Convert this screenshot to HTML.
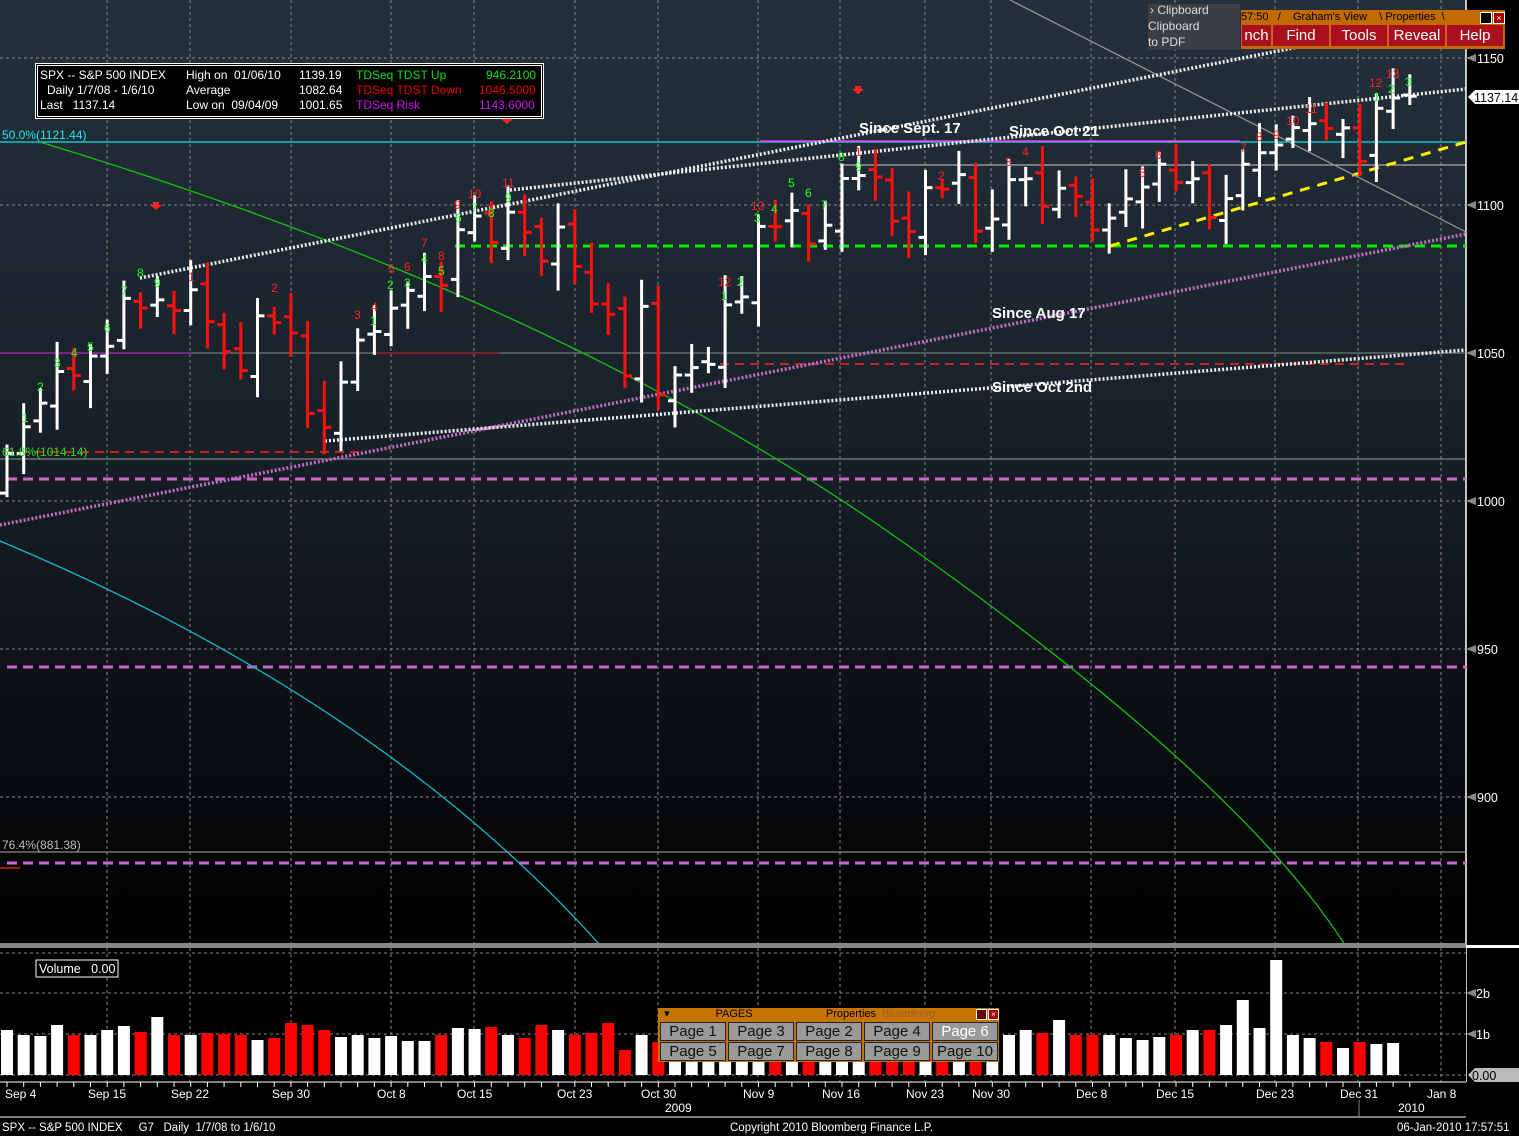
<!DOCTYPE html>
<html><head><meta charset="utf-8">
<style>
html,body{margin:0;padding:0;background:#000;}
body{width:1519px;height:1136px;position:relative;overflow:hidden;font-family:"Liberation Sans",sans-serif;}
#main{position:absolute;left:0;top:0;width:1466px;height:944px;background:linear-gradient(#23303b 0%,#1a232c 40%,#0c1014 75%,#000 100%);}
svg{position:absolute;left:0;top:0;}
.t{font-family:"Liberation Sans",sans-serif;}
#legend{position:absolute;left:35px;top:63px;width:503px;height:50px;border:3px double #fff;background:#000;color:#fff;font-size:12px;line-height:15px;}
#legend div{position:absolute;white-space:pre;}
#menuL{position:absolute;left:1148px;top:4px;width:92px;height:46px;background:#3a3f46;color:#ddd;font-size:12px;line-height:16px;overflow:hidden;}
#bar{position:absolute;left:1241px;top:10px;width:264px;height:39px;background:#c06a00;}
.btn{position:absolute;top:15px;height:21px;background:#a8101e;color:#fff;font-size:15px;line-height:21px;text-align:center;border-left:1px solid #e05050;}
#pages{position:absolute;left:658px;top:1008px;width:341px;height:54px;background:#c67400;}
.pg{position:absolute;width:64px;height:17px;background:#9a9a9a;border:1px solid #223;color:#111;font-size:15px;line-height:17px;text-align:center;}
</style></head><body>
<div id="main"></div>
<svg width="1519" height="1136" id="sv" xmlns="http://www.w3.org/2000/svg">
<rect x="1466" y="0" width="53" height="1136" fill="#000"/>
<line x1="1466" y1="0" x2="1466" y2="1082" stroke="#fff" stroke-width="1.5"/>
<rect x="0" y="948" width="1466" height="134" fill="#000"/>
<g stroke="#888" stroke-dasharray="3,3" stroke-width="1" id="grid">
<line x1="0" y1="58" x2="1466" y2="58"/>
<line x1="0" y1="205" x2="1466" y2="205"/>
<line x1="0" y1="649" x2="1466" y2="649"/>
<line x1="0" y1="797" x2="1466" y2="797"/>
<line x1="0" y1="501" x2="1466" y2="501"/>
<line x1="0" y1="953" x2="1466" y2="953"/>
<line x1="0" y1="993" x2="1466" y2="993"/>
<line x1="0" y1="1034" x2="1466" y2="1034"/>
<line x1="0" y1="1075" x2="1466" y2="1075"/>
</g>
<g id="vgrid" stroke="#888" stroke-dasharray="3,3"></g>
<line x1="0" y1="142" x2="1466" y2="142" stroke="#00e5e5" stroke-width="1.2"/>
<line x1="760" y1="141" x2="1240" y2="141" stroke="#ff30ff" stroke-width="1.5"/>
<line x1="840" y1="165" x2="1466" y2="165" stroke="#ccc" stroke-width="1"/>
<line x1="0" y1="353" x2="1466" y2="353" stroke="#888" stroke-width="1"/>
<line x1="0" y1="353" x2="190" y2="353" stroke="#e020e0" stroke-width="1"/>
<line x1="375" y1="353" x2="500" y2="353" stroke="#e02020" stroke-width="1"/>
<line x1="0" y1="459" x2="1466" y2="459" stroke="#999" stroke-width="1"/>
<line x1="0" y1="852" x2="1466" y2="852" stroke="#aaa" stroke-width="1"/>
<line x1="0" y1="868" x2="20" y2="868" stroke="#ff2020" stroke-width="1.2"/>
<line x1="5" y1="452" x2="365" y2="452" stroke="#ff2020" stroke-width="1.5" stroke-dasharray="9,6"/>
<line x1="720" y1="364" x2="1405" y2="364" stroke="#ff2020" stroke-width="1.5" stroke-dasharray="9,6"/>
<g stroke="#cc66cc" stroke-width="3" stroke-dasharray="10,6">
<line x1="7" y1="479" x2="1466" y2="479"/>
<line x1="7" y1="667" x2="1466" y2="667"/>
<line x1="7" y1="863" x2="1466" y2="863"/>
</g>
<line x1="455" y1="246" x2="1466" y2="246" stroke="#00ee00" stroke-width="3" stroke-dasharray="10,6"/>
<line x1="1110" y1="246" x2="1466" y2="142" stroke="#ffee00" stroke-width="3" stroke-dasharray="10,8"/>
<path d="M40,142 Q560,300 900,540 T1345,945" stroke="#12c012" stroke-width="1.3" fill="none"/>
<path d="M0,541 Q380,700 600,945" stroke="#10b8c8" stroke-width="1.3" fill="none"/>
<line x1="1010" y1="0" x2="1466" y2="232" stroke="#999" stroke-width="1.2"/>
<g stroke-width="3.5" stroke-dasharray="2,2" fill="none">
<line x1="140" y1="278" x2="1318" y2="43" stroke="#eee"/>
<line x1="510" y1="190" x2="1466" y2="89" stroke="#eee"/>
<line x1="325" y1="441" x2="1466" y2="350" stroke="#eee"/>
<line x1="0" y1="525" x2="1466" y2="234" stroke="#c070c0"/>
</g>
<g id="bars"></g>
<g id="vols"></g>
<rect x="0" y="943" width="1466" height="5" fill="#888"/>
<g class="t" font-size="12">
<text x="2" y="139" fill="#20e8e8">50.0%(1121.44)</text>
<text x="2" y="456" fill="#20e020">61.8%(1014.14)</text>
<text x="2" y="849" fill="#bbb">76.4%(881.38)</text>
</g>
<g class="t" font-size="15" font-weight="bold" fill="#fff">
<text x="859" y="133">Since Sept. 17</text>
<text x="1009" y="136">Since Oct 21</text>
<text x="992" y="318">Since Aug 17</text>
<text x="992" y="392">Since Oct 2nd</text>
</g>
<g class="t" font-size="12" fill="#20ff20">
<text x="22" y="422">1</text><text x="37" y="391">2</text><text x="54" y="367">3</text><text x="71" y="357">4</text><text x="87" y="351">5</text><text x="104" y="332">6</text><text x="121" y="295">7</text><text x="137" y="277">8</text><text x="154" y="287">9</text>
<text x="370" y="325">1</text><text x="387" y="289">2</text><text x="404" y="287">3</text><text x="421" y="263">4</text><text x="438" y="275">5</text><text x="455" y="222">6</text><text x="471" y="212">7</text><text x="488" y="217">8</text><text x="505" y="202">9</text>
<text x="721" y="300">1</text><text x="737" y="286">2</text><text x="754" y="222">3</text><text x="771" y="213">4</text><text x="788" y="187">5</text><text x="805" y="197">6</text><text x="821" y="209">7</text><text x="838" y="161">8</text><text x="855" y="171">9</text>
<text x="1373" y="101">1</text><text x="1388" y="93">2</text><text x="1405" y="86">3</text>
</g>
<g class="t" font-size="12" fill="#ff2020">
<text x="188" y="281">1</text><text x="271" y="292">2</text><text x="354" y="319">3</text><text x="371" y="311">4</text><text x="388" y="273">5</text><text x="404" y="271">6</text><text x="421" y="247">7</text><text x="438" y="260">8</text><text x="454" y="209">9</text><text x="468" y="198">10</text><text x="502" y="187">11</text>
<text x="855" y="156">1</text><text x="938" y="180">2</text><text x="1005" y="166">3</text><text x="1022" y="156">4</text><text x="1139" y="177">5</text><text x="1155" y="159">6</text><text x="1240" y="152">7</text><text x="1256" y="141">8</text><text x="1273" y="139">9</text><text x="1286" y="125">10</text><text x="1305" y="113">11</text>
<text x="718" y="286">12</text><text x="751" y="210">13</text>
<text x="1369" y="87">12</text><text x="1386" y="78">13</text>
</g>
<g fill="#ff2020">
<path d="M153,202 h6 v3 h3 l-6,5 l-6,-5 h3z"/>
<path d="M855,86 h6 v3 h3 l-6,5 l-6,-5 h3z"/>
<path d="M504,116 h6 v3 h3 l-6,5 l-6,-5 h3z"/>
</g>
<g class="t" font-size="12.5" fill="#fff">
<path d="M1466,58 l10,-4 v8z" fill="#888"/><text x="1477" y="63">1150</text>
<path d="M1466,205 l10,-4 v8z" fill="#888"/><text x="1477" y="210">1100</text>
<path d="M1466,353 l10,-4 v8z" fill="#888"/><text x="1477" y="358">1050</text>
<path d="M1466,501 l10,-4 v8z" fill="#888"/><text x="1477" y="506">1000</text>
<path d="M1466,649 l10,-4 v8z" fill="#888"/><text x="1477" y="654">950</text>
<path d="M1466,797 l10,-4 v8z" fill="#888"/><text x="1477" y="802">900</text>
<path d="M1468,97 l7,-7 h44 v14 h-44z" fill="#fff"/><text x="1474" y="102" fill="#000">1137.14</text>
<path d="M1466,993 l10,-4 v8z" fill="#888"/><text x="1476" y="998">2b</text>
<path d="M1466,1034 l10,-4 v8z" fill="#888"/><text x="1476" y="1039">1b</text>
<path d="M1468,1075 l7,-7 h44 v14 h-44z" fill="#bbb"/><text x="1472" y="1080" fill="#000">0.00</text>
<rect x="1466" y="945" width="53" height="3" fill="#fff"/>
</g>
<line x1="0" y1="1082" x2="1466" y2="1082" stroke="#fff"/>
<g id="ticks" stroke="#fff"></g>
<g class="t" font-size="12" fill="#fff">
<text x="5" y="1098">Sep 4</text><text x="88" y="1098">Sep 15</text><text x="171" y="1098">Sep 22</text><text x="272" y="1098">Sep 30</text><text x="377" y="1098">Oct 8</text><text x="457" y="1098">Oct 15</text><text x="557" y="1098">Oct 23</text><text x="641" y="1098">Oct 30</text><text x="743" y="1098">Nov 9</text><text x="822" y="1098">Nov 16</text><text x="906" y="1098">Nov 23</text><text x="972" y="1098">Nov 30</text><text x="1076" y="1098">Dec 8</text><text x="1156" y="1098">Dec 15</text><text x="1256" y="1098">Dec 23</text><text x="1340" y="1098">Dec 31</text><text x="1427" y="1098">Jan 8</text>
<text x="665" y="1112">2009</text><text x="1398" y="1112">2010</text>
</g>
<line x1="1359" y1="1100" x2="1359" y2="1116" stroke="#888"/>
<line x1="0" y1="1117" x2="1466" y2="1117" stroke="#fff"/>
<g class="t" font-size="11.5" fill="#fff">
<text x="2" y="1131" xml:space="preserve">SPX -- S&amp;P 500 INDEX     G7   Daily  1/7/08 to 1/6/10</text>
<text x="730" y="1131">Copyright 2010 Bloomberg Finance L.P.</text>
<text x="1397" y="1131">06-Jan-2010 17:57:51</text>
</g>
<rect x="36" y="960" width="82" height="17" fill="#000" stroke="#fff"/>
<text class="t" x="39" y="973" font-size="12.5" fill="#fff" xml:space="preserve">Volume   0.00</text>
</svg>

<div id="legend">
<div style="left:2px;top:2px">SPX -- S&amp;P 500 INDEX</div>
<div style="left:9px;top:17px">Daily 1/7/08 - 1/6/10</div>
<div style="left:2px;top:32px">Last   1137.14</div>
<div style="left:148px;top:2px">High on  01/06/10</div>
<div style="left:148px;top:17px">Average</div>
<div style="left:148px;top:32px">Low on  09/04/09</div>
<div style="left:261px;top:2px">1139.19</div>
<div style="left:261px;top:17px">1082.64</div>
<div style="left:261px;top:32px">1001.65</div>
<div style="left:318px;top:2px;color:#10e010">TDSeq TDST Up</div>
<div style="left:318px;top:17px;color:#e00000">TDSeq TDST Down</div>
<div style="left:318px;top:32px;color:#d010f0">TDSeq Risk</div>
<div style="left:448px;top:2px;color:#10e010">946.2100</div>
<div style="left:441px;top:17px;color:#e00000">1046.5000</div>
<div style="left:441px;top:32px;color:#d010f0">1143.6000</div>
</div>

<div id="menuL"><div style="margin-left:2px;margin-top:-2px">› Clipboard</div><div>Clipboard</div><div>to PDF</div></div>
<div id="bar">
<div style="position:absolute;left:0;top:1px;font-size:11px;color:#000;white-space:pre">57:50   /    Graham's View    \ Properties  \</div>
<div style="position:absolute;left:239px;top:2px;width:10px;height:10px;background:#000;border:1px solid #fff"></div>
<div style="position:absolute;left:252px;top:2px;width:10px;height:10px;background:#a00;border:1px solid #fff;color:#fff;font-size:9px;line-height:10px;text-align:center">×</div>
<div class="btn" style="left:0;width:29px">nch</div>
<div class="btn" style="left:31px;width:56px">Find</div>
<div class="btn" style="left:89px;width:56px">Tools</div>
<div class="btn" style="left:147px;width:56px">Reveal</div>
<div class="btn" style="left:205px;width:56px">Help</div>
</div>

<div id="pages">
<div style="position:absolute;left:0;top:0;width:341px;height:13px;font-size:11px;color:#000;white-space:pre;line-height:12px">  ▾               PAGES                        Properties  <span style="color:#a06030">Bloomberg</span></div>
<div style="position:absolute;left:318px;top:1px;width:9px;height:9px;background:#600;border:1px solid #fff"></div>
<div style="position:absolute;left:330px;top:1px;width:9px;height:9px;background:#a00;border:1px solid #fff;color:#fff;font-size:8px;line-height:9px;text-align:center">×</div>
<div class="pg" style="left:2px;top:14px">Page 1</div>
<div class="pg" style="left:70px;top:14px">Page 3</div>
<div class="pg" style="left:138px;top:14px">Page 2</div>
<div class="pg" style="left:206px;top:14px">Page 4</div>
<div class="pg" style="left:274px;top:14px;color:#fff">Page 6</div>
<div class="pg" style="left:2px;top:34px">Page 5</div>
<div class="pg" style="left:70px;top:34px">Page 7</div>
<div class="pg" style="left:138px;top:34px">Page 8</div>
<div class="pg" style="left:206px;top:34px">Page 9</div>
<div class="pg" style="left:274px;top:34px">Page 10</div>
</div>

<script>
(function(){
var NS="http://www.w3.org/2000/svg";
var C=[1016.4,1025.4,1033.4,1044.1,1042.7,1049.3,1052.6,1068.8,1065.5,1068.3,1064.7,1071.7,1060.9,1050.8,1044.4,1062.9,1060.6,1057.1,1029.9,1025.2,1040.5,1054.7,1057.6,1065.5,1071.5,1076.2,1073.2,1092.0,1096.6,1087.7,1097.9,1091.1,1081.4,1092.9,1079.6,1066.9,1063.4,1042.6,1066.1,1036.2,1042.9,1045.4,1046.5,1066.6,1069.3,1093.1,1093.0,1098.5,1087.2,1093.5,1109.3,1110.3,1109.8,1094.9,1091.4,1106.2,1105.7,1110.6,1091.5,1095.6,1108.9,1109.2,1099.9,1106.0,1103.3,1091.9,1095.9,1102.4,1106.4,1114.1,1107.9,1109.2,1096.1,1102.5,1114.1,1118.0,1120.6,1126.5,1127.8,1126.2,1126.4,1115.1,1133.0,1136.5,1137.1];
var V=[38,45,40,39,50,40,40,45,49,43,58,40,40,42,41,40,35,37,52,50,45,38,40,37,39,34,34,40,47,46,48,40,37,50,45,40,42,52,25,40,33,34,32,30,30,30,30,30,32,30,30,30,32,30,30,30,30,32,30,30,40,40,45,42,55,40,40,40,37,35,38,40,45,45,50,75,47,115,40,37,33,27,33,31,32,40,47];
function y(p){return 58+(1150-p)*2.96;}
function ln(g,x1,y1,x2,y2,c,w){var l=document.createElementNS(NS,"line");l.setAttribute("x1",x1);l.setAttribute("y1",y1);l.setAttribute("x2",x2);l.setAttribute("y2",y2);l.setAttribute("stroke",c);l.setAttribute("stroke-width",w);g.appendChild(l);}
var b=document.getElementById("bars"),vg=document.getElementById("vols"),tk=document.getElementById("ticks"),gr=document.getElementById("vgrid");
for(var i=0;i<C.length;i++){
 var x=7+i*16.7, c=C[i], o=i?C[i-1]+((i*7)%5-2):1003;
 var up=i==0||c>=C[i-1], col=up?"#fff":"#ff1010";
 var hi=Math.max(o,c)+3+(i*13%8), lo=Math.min(o,c)-3-(i*11%7);
 if(i==0)lo=1001.65;
 ln(b,x,y(hi),x,y(lo),col,3);
 ln(b,x-7,y(o),x,y(o),col,3);
 ln(b,x,y(c),x+7,y(c),col,3);
 ln(tk,x,1082,x,1087,"#fff",1);
}
for(var j=0;j<C.length-1;j++){
 var r=document.createElementNS(NS,"rect");var x2=7+j*16.7-6;var h=V[j+1]||35;
 var col2=(j==0||C[j]>=C[j-1])?"#fff":"#ff0000";
 r.setAttribute("x",Math.max(0,x2));r.setAttribute("y",1075-h);r.setAttribute("width",x2<0?12+x2:12);r.setAttribute("height",h);r.setAttribute("fill",col2);vg.appendChild(r);
}
[107,190,291,391,474,575,658,758,840,925,991,1091,1175,1275,1358,1441].forEach(function(x){ln(gr,x,0,x,1082,"#888",1);});
})();
</script>
</body></html>
